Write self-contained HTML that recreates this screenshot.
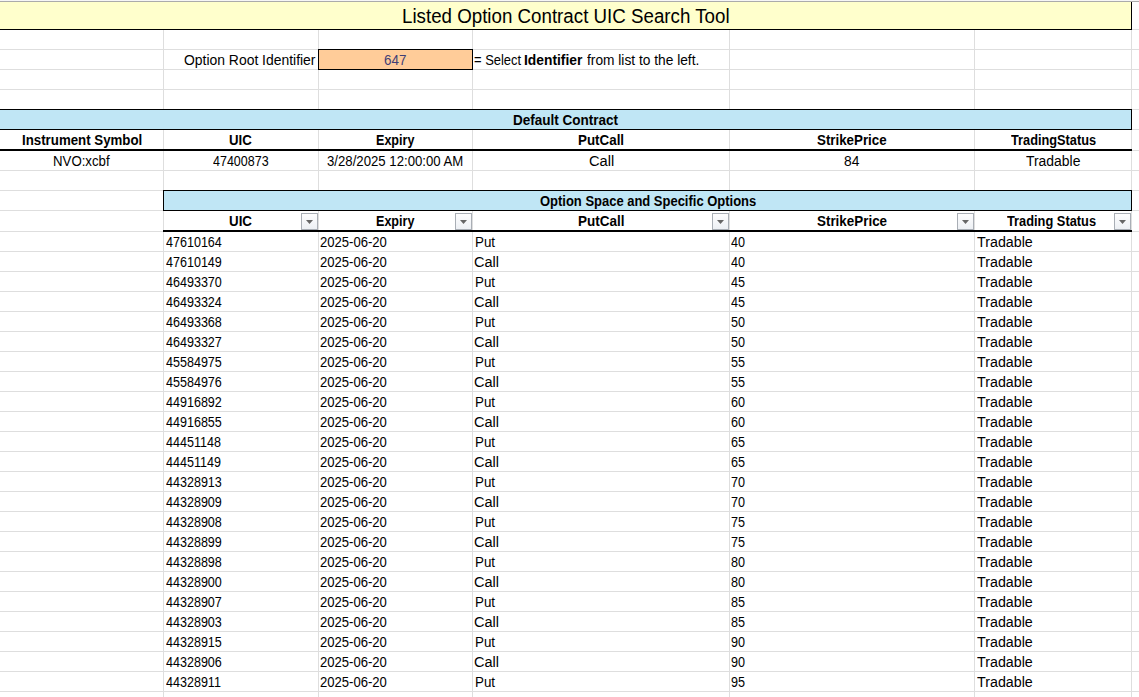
<!DOCTYPE html>
<html><head><meta charset="utf-8"><style>
html,body{margin:0;padding:0;background:#fff;width:1139px;height:697px;overflow:hidden;position:relative}
.r{position:absolute}
.t{position:absolute;white-space:nowrap;line-height:1;font-family:"Liberation Sans",sans-serif;color:#000;transform-origin:0 0}
.d{font-size:14px}
.fb{position:absolute;width:15px;height:15px;border:1px solid #A9AEB5;background:linear-gradient(#FDFDFE,#EDF0F4)}
.fb svg{position:absolute;left:0;top:0}
</style></head><body>
<div class="r" style="left:0px;top:0px;width:1139px;height:1px;background:#F6F6F6"></div>
<div class="r" style="left:0px;top:1px;width:1139px;height:1px;background:#ABABAB"></div>
<div class="r" style="left:0px;top:29px;width:1139px;height:1px;background:#DEDEDE"></div>
<div class="r" style="left:0px;top:49px;width:1139px;height:1px;background:#DEDEDE"></div>
<div class="r" style="left:0px;top:69px;width:1139px;height:1px;background:#DEDEDE"></div>
<div class="r" style="left:0px;top:89px;width:1139px;height:1px;background:#DEDEDE"></div>
<div class="r" style="left:0px;top:109px;width:1139px;height:1px;background:#DEDEDE"></div>
<div class="r" style="left:0px;top:129px;width:1139px;height:1px;background:#DEDEDE"></div>
<div class="r" style="left:0px;top:150px;width:1139px;height:1px;background:#DEDEDE"></div>
<div class="r" style="left:0px;top:170px;width:1139px;height:1px;background:#DEDEDE"></div>
<div class="r" style="left:0px;top:190px;width:1139px;height:1px;background:#DEDEDE"></div>
<div class="r" style="left:0px;top:210px;width:1139px;height:1px;background:#DEDEDE"></div>
<div class="r" style="left:0px;top:231px;width:1139px;height:1px;background:#DEDEDE"></div>
<div class="r" style="left:0px;top:251px;width:1139px;height:1px;background:#DEDEDE"></div>
<div class="r" style="left:0px;top:271px;width:1139px;height:1px;background:#DEDEDE"></div>
<div class="r" style="left:0px;top:291px;width:1139px;height:1px;background:#DEDEDE"></div>
<div class="r" style="left:0px;top:311px;width:1139px;height:1px;background:#DEDEDE"></div>
<div class="r" style="left:0px;top:331px;width:1139px;height:1px;background:#DEDEDE"></div>
<div class="r" style="left:0px;top:351px;width:1139px;height:1px;background:#DEDEDE"></div>
<div class="r" style="left:0px;top:371px;width:1139px;height:1px;background:#DEDEDE"></div>
<div class="r" style="left:0px;top:391px;width:1139px;height:1px;background:#DEDEDE"></div>
<div class="r" style="left:0px;top:411px;width:1139px;height:1px;background:#DEDEDE"></div>
<div class="r" style="left:0px;top:431px;width:1139px;height:1px;background:#DEDEDE"></div>
<div class="r" style="left:0px;top:451px;width:1139px;height:1px;background:#DEDEDE"></div>
<div class="r" style="left:0px;top:471px;width:1139px;height:1px;background:#DEDEDE"></div>
<div class="r" style="left:0px;top:491px;width:1139px;height:1px;background:#DEDEDE"></div>
<div class="r" style="left:0px;top:511px;width:1139px;height:1px;background:#DEDEDE"></div>
<div class="r" style="left:0px;top:531px;width:1139px;height:1px;background:#DEDEDE"></div>
<div class="r" style="left:0px;top:551px;width:1139px;height:1px;background:#DEDEDE"></div>
<div class="r" style="left:0px;top:571px;width:1139px;height:1px;background:#DEDEDE"></div>
<div class="r" style="left:0px;top:591px;width:1139px;height:1px;background:#DEDEDE"></div>
<div class="r" style="left:0px;top:611px;width:1139px;height:1px;background:#DEDEDE"></div>
<div class="r" style="left:0px;top:631px;width:1139px;height:1px;background:#DEDEDE"></div>
<div class="r" style="left:0px;top:651px;width:1139px;height:1px;background:#DEDEDE"></div>
<div class="r" style="left:0px;top:671px;width:1139px;height:1px;background:#DEDEDE"></div>
<div class="r" style="left:0px;top:691px;width:1139px;height:1px;background:#DEDEDE"></div>
<div class="r" style="left:163px;top:30px;width:1px;height:667px;background:#DEDEDE"></div>
<div class="r" style="left:318px;top:30px;width:1px;height:667px;background:#DEDEDE"></div>
<div class="r" style="left:472px;top:30px;width:1px;height:667px;background:#DEDEDE"></div>
<div class="r" style="left:729px;top:30px;width:1px;height:667px;background:#DEDEDE"></div>
<div class="r" style="left:974px;top:30px;width:1px;height:667px;background:#DEDEDE"></div>
<div class="r" style="left:1131px;top:30px;width:1px;height:667px;background:#DEDEDE"></div>
<div class="r" style="left:0px;top:2px;width:1131px;height:27px;background:#FFFFCC"></div>
<div class="r" style="left:0px;top:110px;width:1131px;height:19px;background:#C0E6F5"></div>
<div class="r" style="left:164px;top:191px;width:967px;height:19px;background:#C0E6F5"></div>
<div class="r" style="left:319px;top:50px;width:153px;height:19px;background:#FFCC99"></div>
<div class="r" style="left:0px;top:29px;width:1132px;height:1px;background:#000"></div>
<div class="r" style="left:1131px;top:2px;width:1px;height:28px;background:#000"></div>
<div class="r" style="left:318px;top:49px;width:155px;height:1px;background:#000"></div>
<div class="r" style="left:318px;top:69px;width:155px;height:1px;background:#000"></div>
<div class="r" style="left:318px;top:49px;width:1px;height:21px;background:#000"></div>
<div class="r" style="left:472px;top:49px;width:1px;height:21px;background:#000"></div>
<div class="r" style="left:0px;top:109px;width:1132px;height:1px;background:#000"></div>
<div class="r" style="left:0px;top:129px;width:1132px;height:1px;background:#000"></div>
<div class="r" style="left:1131px;top:109px;width:1px;height:21px;background:#000"></div>
<div class="r" style="left:0px;top:149px;width:1132px;height:2px;background:#000"></div>
<div class="r" style="left:163px;top:190px;width:969px;height:1px;background:#000"></div>
<div class="r" style="left:163px;top:210px;width:969px;height:1px;background:#000"></div>
<div class="r" style="left:163px;top:190px;width:1px;height:21px;background:#000"></div>
<div class="r" style="left:1131px;top:190px;width:1px;height:21px;background:#000"></div>
<div class="r" style="left:163px;top:230px;width:969px;height:2px;background:#000"></div>
<div class="fb" style="left:301px;top:213px"><svg width="15" height="15"><polygon points="4,6 11,6 7.5,10" fill="#666666"/></svg></div>
<div class="fb" style="left:455px;top:213px"><svg width="15" height="15"><polygon points="4,6 11,6 7.5,10" fill="#666666"/></svg></div>
<div class="fb" style="left:712px;top:213px"><svg width="15" height="15"><polygon points="4,6 11,6 7.5,10" fill="#666666"/></svg></div>
<div class="fb" style="left:957px;top:213px"><svg width="15" height="15"><polygon points="4,6 11,6 7.5,10" fill="#666666"/></svg></div>
<div class="fb" style="left:1114px;top:213px"><svg width="15" height="15"><polygon points="4,6 11,6 7.5,10" fill="#666666"/></svg></div>
<div class="t" style="left:402.44px;top:7px;font-size:19.5px;transform:scaleX(0.9604)">Listed Option Contract UIC Search Tool</div>
<div class="t" style="left:184.19px;top:53px;font-size:14px;transform:scaleX(0.9938)">Option Root Identifier</div>
<div class="t" style="left:383.68px;top:53px;font-size:14px;color:#3F3F76;transform:scaleX(0.9579)">647</div>
<div class="t" style="left:474.17px;top:53px;font-size:14px;transform:scaleX(0.9247)">= Select</div>
<div class="t" style="left:523.97px;top:53px;font-size:14px;font-weight:bold;transform:scaleX(0.9863)">Identifier</div>
<div class="t" style="left:587.20px;top:53px;font-size:14px;transform:scaleX(0.9817)">from list to the left.</div>
<div class="t" style="left:513.18px;top:113px;font-size:14px;font-weight:bold;transform:scaleX(0.9652)">Default Contract</div>
<div class="t" style="left:21.79px;top:133px;font-size:14px;font-weight:bold;transform:scaleX(0.9484)">Instrument Symbol</div>
<div class="t" style="left:229.30px;top:133px;font-size:14px;font-weight:bold;transform:scaleX(0.9457)">UIC</div>
<div class="t" style="left:375.59px;top:133px;font-size:14px;font-weight:bold;transform:scaleX(0.8978)">Expiry</div>
<div class="t" style="left:577.78px;top:133px;font-size:14px;font-weight:bold;transform:scaleX(0.9550)">PutCall</div>
<div class="t" style="left:816.98px;top:133px;font-size:14px;font-weight:bold;transform:scaleX(0.9517)">StrikePrice</div>
<div class="t" style="left:1010.60px;top:133px;font-size:14px;font-weight:bold;transform:scaleX(0.9107)">TradingStatus</div>
<div class="t" style="left:53.05px;top:154px;font-size:14px;transform:scaleX(0.9457)">NVO:xcbf</div>
<div class="t" style="left:212.60px;top:154px;font-size:14px;transform:scaleX(0.8928)">47400873</div>
<div class="t" style="left:327.19px;top:154px;font-size:14px;transform:scaleX(0.9416)">3/28/2025 12:00:00 AM</div>
<div class="t" style="left:588.88px;top:154px;font-size:14px;transform:scaleX(1.0471)">Call</div>
<div class="t" style="left:844.09px;top:154px;font-size:14px;transform:scaleX(0.9864)">84</div>
<div class="t" style="left:1026.20px;top:154px;font-size:14px;transform:scaleX(0.9938)">Tradable</div>
<div class="t" style="left:539.80px;top:194px;font-size:14px;font-weight:bold;transform:scaleX(0.9265)">Option Space and Specific Options</div>
<div class="t" style="left:229.15px;top:214px;font-size:14px;font-weight:bold;transform:scaleX(0.9523)">UIC</div>
<div class="t" style="left:375.59px;top:214px;font-size:14px;font-weight:bold;transform:scaleX(0.8978)">Expiry</div>
<div class="t" style="left:578.18px;top:214px;font-size:14px;font-weight:bold;transform:scaleX(0.9636)">PutCall</div>
<div class="t" style="left:816.57px;top:214px;font-size:14px;font-weight:bold;transform:scaleX(0.9573)">StrikePrice</div>
<div class="t" style="left:1007.00px;top:214px;font-size:14px;font-weight:bold;transform:scaleX(0.9154)">Trading Status</div>
<div class="t d" style="left:165.79px;top:235px;transform:scaleX(0.8961)">47610164</div>
<div class="t d" style="left:319.97px;top:235px;transform:scaleX(0.9337)">2025-06-20</div>
<div class="t d" style="left:474.83px;top:235px;transform:scaleX(0.9549)">Put</div>
<div class="t d" style="left:731.38px;top:235px;transform:scaleX(0.9017)">40</div>
<div class="t d" style="left:977.40px;top:235px;transform:scaleX(1.0195)">Tradable</div>
<div class="t d" style="left:165.79px;top:255px;transform:scaleX(0.8961)">47610149</div>
<div class="t d" style="left:319.97px;top:255px;transform:scaleX(0.9337)">2025-06-20</div>
<div class="t d" style="left:473.74px;top:255px;transform:scaleX(1.0369)">Call</div>
<div class="t d" style="left:731.38px;top:255px;transform:scaleX(0.9017)">40</div>
<div class="t d" style="left:977.40px;top:255px;transform:scaleX(1.0195)">Tradable</div>
<div class="t d" style="left:165.79px;top:275px;transform:scaleX(0.8961)">46493370</div>
<div class="t d" style="left:319.97px;top:275px;transform:scaleX(0.9337)">2025-06-20</div>
<div class="t d" style="left:474.83px;top:275px;transform:scaleX(0.9549)">Put</div>
<div class="t d" style="left:731.38px;top:275px;transform:scaleX(0.9017)">45</div>
<div class="t d" style="left:977.40px;top:275px;transform:scaleX(1.0195)">Tradable</div>
<div class="t d" style="left:165.79px;top:295px;transform:scaleX(0.8961)">46493324</div>
<div class="t d" style="left:319.97px;top:295px;transform:scaleX(0.9337)">2025-06-20</div>
<div class="t d" style="left:473.74px;top:295px;transform:scaleX(1.0369)">Call</div>
<div class="t d" style="left:731.38px;top:295px;transform:scaleX(0.9017)">45</div>
<div class="t d" style="left:977.40px;top:295px;transform:scaleX(1.0195)">Tradable</div>
<div class="t d" style="left:165.79px;top:315px;transform:scaleX(0.8961)">46493368</div>
<div class="t d" style="left:319.97px;top:315px;transform:scaleX(0.9337)">2025-06-20</div>
<div class="t d" style="left:474.83px;top:315px;transform:scaleX(0.9549)">Put</div>
<div class="t d" style="left:731.38px;top:315px;transform:scaleX(0.9017)">50</div>
<div class="t d" style="left:977.40px;top:315px;transform:scaleX(1.0195)">Tradable</div>
<div class="t d" style="left:165.79px;top:335px;transform:scaleX(0.8961)">46493327</div>
<div class="t d" style="left:319.97px;top:335px;transform:scaleX(0.9337)">2025-06-20</div>
<div class="t d" style="left:473.74px;top:335px;transform:scaleX(1.0369)">Call</div>
<div class="t d" style="left:731.38px;top:335px;transform:scaleX(0.9017)">50</div>
<div class="t d" style="left:977.40px;top:335px;transform:scaleX(1.0195)">Tradable</div>
<div class="t d" style="left:165.79px;top:355px;transform:scaleX(0.8961)">45584975</div>
<div class="t d" style="left:319.97px;top:355px;transform:scaleX(0.9337)">2025-06-20</div>
<div class="t d" style="left:474.83px;top:355px;transform:scaleX(0.9549)">Put</div>
<div class="t d" style="left:731.38px;top:355px;transform:scaleX(0.9017)">55</div>
<div class="t d" style="left:977.40px;top:355px;transform:scaleX(1.0195)">Tradable</div>
<div class="t d" style="left:165.79px;top:375px;transform:scaleX(0.8961)">45584976</div>
<div class="t d" style="left:319.97px;top:375px;transform:scaleX(0.9337)">2025-06-20</div>
<div class="t d" style="left:473.74px;top:375px;transform:scaleX(1.0369)">Call</div>
<div class="t d" style="left:731.38px;top:375px;transform:scaleX(0.9017)">55</div>
<div class="t d" style="left:977.40px;top:375px;transform:scaleX(1.0195)">Tradable</div>
<div class="t d" style="left:165.79px;top:395px;transform:scaleX(0.8961)">44916892</div>
<div class="t d" style="left:319.97px;top:395px;transform:scaleX(0.9337)">2025-06-20</div>
<div class="t d" style="left:474.83px;top:395px;transform:scaleX(0.9549)">Put</div>
<div class="t d" style="left:731.38px;top:395px;transform:scaleX(0.9017)">60</div>
<div class="t d" style="left:977.40px;top:395px;transform:scaleX(1.0195)">Tradable</div>
<div class="t d" style="left:165.79px;top:415px;transform:scaleX(0.8961)">44916855</div>
<div class="t d" style="left:319.97px;top:415px;transform:scaleX(0.9337)">2025-06-20</div>
<div class="t d" style="left:473.74px;top:415px;transform:scaleX(1.0369)">Call</div>
<div class="t d" style="left:731.38px;top:415px;transform:scaleX(0.9017)">60</div>
<div class="t d" style="left:977.40px;top:415px;transform:scaleX(1.0195)">Tradable</div>
<div class="t d" style="left:165.79px;top:435px;transform:scaleX(0.8961)">44451148</div>
<div class="t d" style="left:319.97px;top:435px;transform:scaleX(0.9337)">2025-06-20</div>
<div class="t d" style="left:474.83px;top:435px;transform:scaleX(0.9549)">Put</div>
<div class="t d" style="left:731.38px;top:435px;transform:scaleX(0.9017)">65</div>
<div class="t d" style="left:977.40px;top:435px;transform:scaleX(1.0195)">Tradable</div>
<div class="t d" style="left:165.79px;top:455px;transform:scaleX(0.8961)">44451149</div>
<div class="t d" style="left:319.97px;top:455px;transform:scaleX(0.9337)">2025-06-20</div>
<div class="t d" style="left:473.74px;top:455px;transform:scaleX(1.0369)">Call</div>
<div class="t d" style="left:731.38px;top:455px;transform:scaleX(0.9017)">65</div>
<div class="t d" style="left:977.40px;top:455px;transform:scaleX(1.0195)">Tradable</div>
<div class="t d" style="left:165.79px;top:475px;transform:scaleX(0.8961)">44328913</div>
<div class="t d" style="left:319.97px;top:475px;transform:scaleX(0.9337)">2025-06-20</div>
<div class="t d" style="left:474.83px;top:475px;transform:scaleX(0.9549)">Put</div>
<div class="t d" style="left:731.38px;top:475px;transform:scaleX(0.9017)">70</div>
<div class="t d" style="left:977.40px;top:475px;transform:scaleX(1.0195)">Tradable</div>
<div class="t d" style="left:165.79px;top:495px;transform:scaleX(0.8961)">44328909</div>
<div class="t d" style="left:319.97px;top:495px;transform:scaleX(0.9337)">2025-06-20</div>
<div class="t d" style="left:473.74px;top:495px;transform:scaleX(1.0369)">Call</div>
<div class="t d" style="left:731.38px;top:495px;transform:scaleX(0.9017)">70</div>
<div class="t d" style="left:977.40px;top:495px;transform:scaleX(1.0195)">Tradable</div>
<div class="t d" style="left:165.79px;top:515px;transform:scaleX(0.8961)">44328908</div>
<div class="t d" style="left:319.97px;top:515px;transform:scaleX(0.9337)">2025-06-20</div>
<div class="t d" style="left:474.83px;top:515px;transform:scaleX(0.9549)">Put</div>
<div class="t d" style="left:731.38px;top:515px;transform:scaleX(0.9017)">75</div>
<div class="t d" style="left:977.40px;top:515px;transform:scaleX(1.0195)">Tradable</div>
<div class="t d" style="left:165.79px;top:535px;transform:scaleX(0.8961)">44328899</div>
<div class="t d" style="left:319.97px;top:535px;transform:scaleX(0.9337)">2025-06-20</div>
<div class="t d" style="left:473.74px;top:535px;transform:scaleX(1.0369)">Call</div>
<div class="t d" style="left:731.38px;top:535px;transform:scaleX(0.9017)">75</div>
<div class="t d" style="left:977.40px;top:535px;transform:scaleX(1.0195)">Tradable</div>
<div class="t d" style="left:165.79px;top:555px;transform:scaleX(0.8961)">44328898</div>
<div class="t d" style="left:319.97px;top:555px;transform:scaleX(0.9337)">2025-06-20</div>
<div class="t d" style="left:474.83px;top:555px;transform:scaleX(0.9549)">Put</div>
<div class="t d" style="left:731.38px;top:555px;transform:scaleX(0.9017)">80</div>
<div class="t d" style="left:977.40px;top:555px;transform:scaleX(1.0195)">Tradable</div>
<div class="t d" style="left:165.79px;top:575px;transform:scaleX(0.8961)">44328900</div>
<div class="t d" style="left:319.97px;top:575px;transform:scaleX(0.9337)">2025-06-20</div>
<div class="t d" style="left:473.74px;top:575px;transform:scaleX(1.0369)">Call</div>
<div class="t d" style="left:731.38px;top:575px;transform:scaleX(0.9017)">80</div>
<div class="t d" style="left:977.40px;top:575px;transform:scaleX(1.0195)">Tradable</div>
<div class="t d" style="left:165.79px;top:595px;transform:scaleX(0.8961)">44328907</div>
<div class="t d" style="left:319.97px;top:595px;transform:scaleX(0.9337)">2025-06-20</div>
<div class="t d" style="left:474.83px;top:595px;transform:scaleX(0.9549)">Put</div>
<div class="t d" style="left:731.38px;top:595px;transform:scaleX(0.9017)">85</div>
<div class="t d" style="left:977.40px;top:595px;transform:scaleX(1.0195)">Tradable</div>
<div class="t d" style="left:165.79px;top:615px;transform:scaleX(0.8961)">44328903</div>
<div class="t d" style="left:319.97px;top:615px;transform:scaleX(0.9337)">2025-06-20</div>
<div class="t d" style="left:473.74px;top:615px;transform:scaleX(1.0369)">Call</div>
<div class="t d" style="left:731.38px;top:615px;transform:scaleX(0.9017)">85</div>
<div class="t d" style="left:977.40px;top:615px;transform:scaleX(1.0195)">Tradable</div>
<div class="t d" style="left:165.79px;top:635px;transform:scaleX(0.8961)">44328915</div>
<div class="t d" style="left:319.97px;top:635px;transform:scaleX(0.9337)">2025-06-20</div>
<div class="t d" style="left:474.83px;top:635px;transform:scaleX(0.9549)">Put</div>
<div class="t d" style="left:731.38px;top:635px;transform:scaleX(0.9017)">90</div>
<div class="t d" style="left:977.40px;top:635px;transform:scaleX(1.0195)">Tradable</div>
<div class="t d" style="left:165.79px;top:655px;transform:scaleX(0.8961)">44328906</div>
<div class="t d" style="left:319.97px;top:655px;transform:scaleX(0.9337)">2025-06-20</div>
<div class="t d" style="left:473.74px;top:655px;transform:scaleX(1.0369)">Call</div>
<div class="t d" style="left:731.38px;top:655px;transform:scaleX(0.9017)">90</div>
<div class="t d" style="left:977.40px;top:655px;transform:scaleX(1.0195)">Tradable</div>
<div class="t d" style="left:165.79px;top:675px;transform:scaleX(0.8961)">44328911</div>
<div class="t d" style="left:319.97px;top:675px;transform:scaleX(0.9337)">2025-06-20</div>
<div class="t d" style="left:474.83px;top:675px;transform:scaleX(0.9549)">Put</div>
<div class="t d" style="left:731.38px;top:675px;transform:scaleX(0.9017)">95</div>
<div class="t d" style="left:977.40px;top:675px;transform:scaleX(1.0195)">Tradable</div>
</body></html>
